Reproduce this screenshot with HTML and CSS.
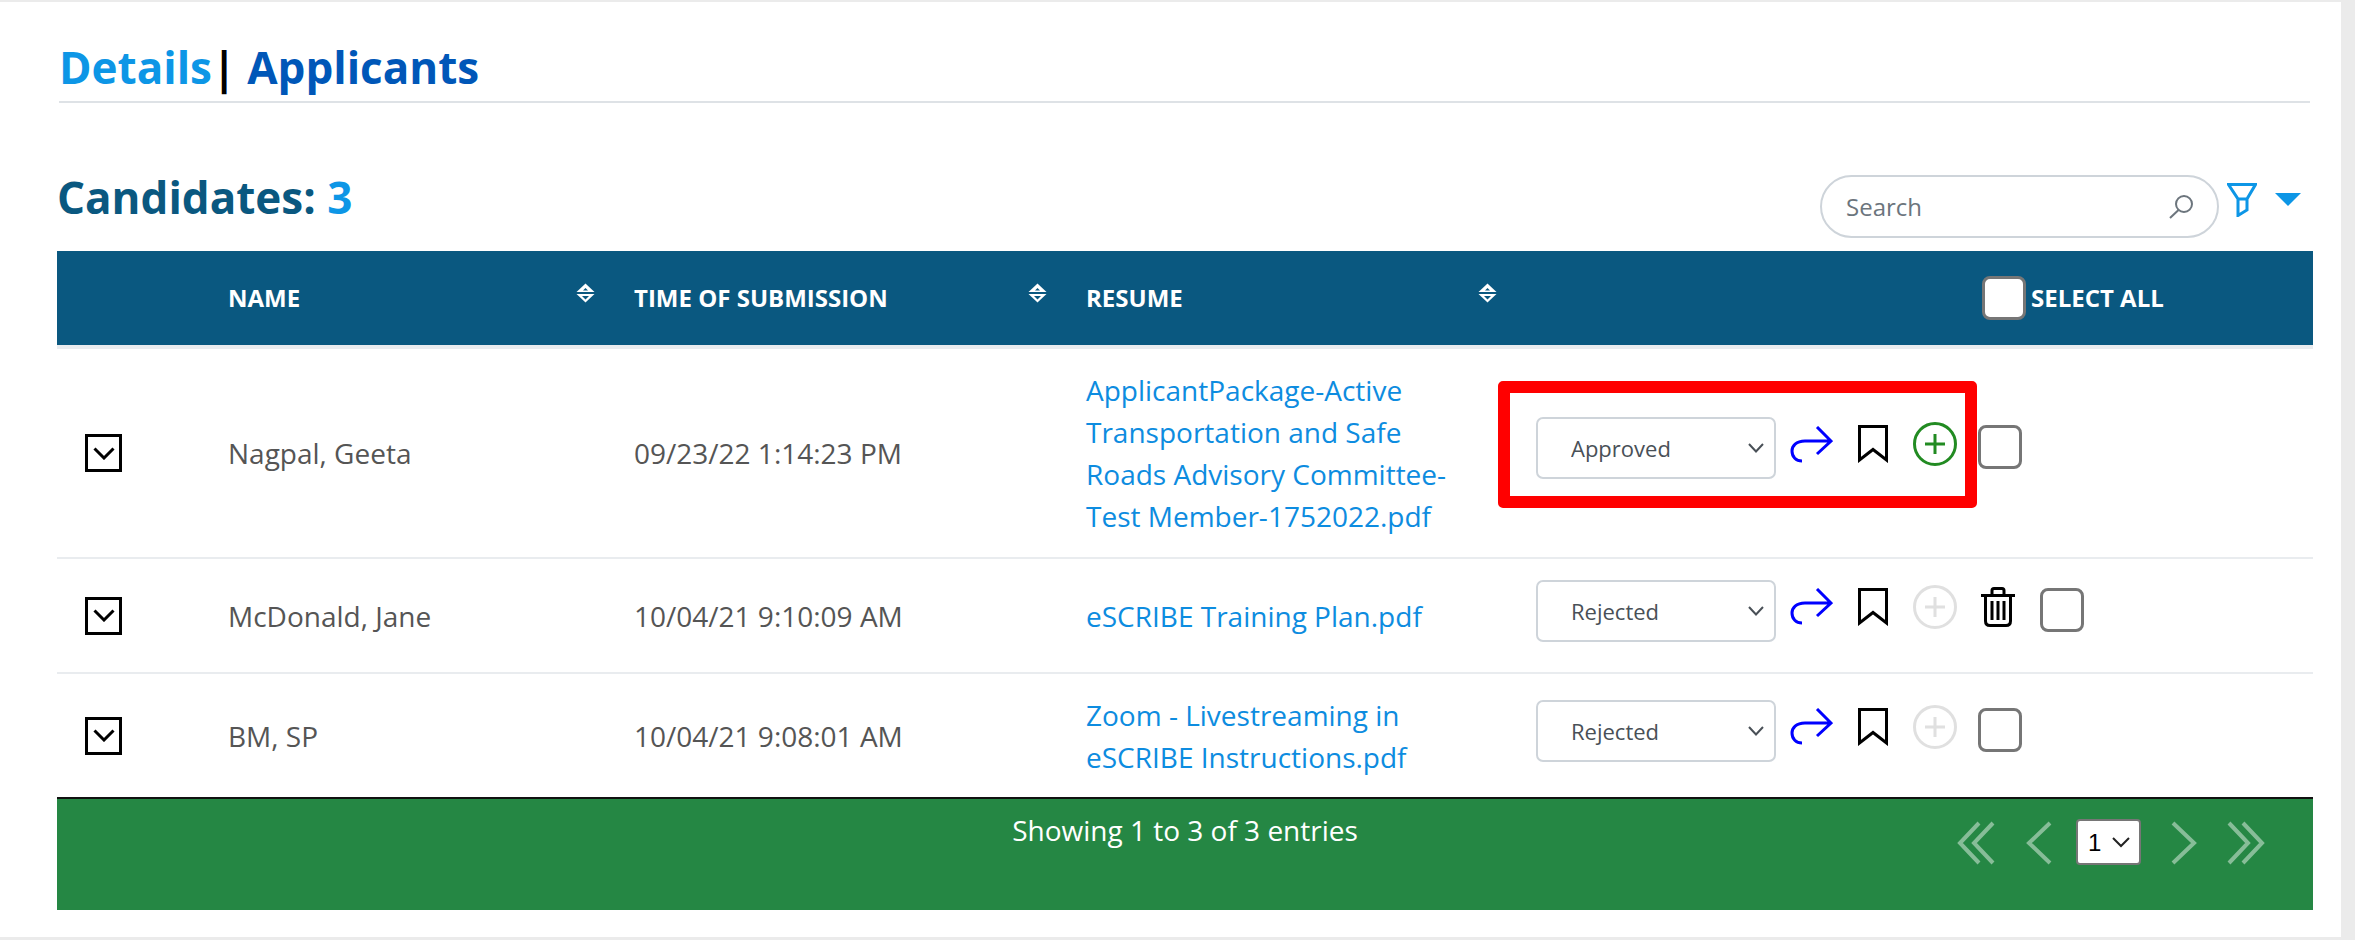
FILE: index.html
```html
<!DOCTYPE html>
<html lang="en">
<head>
<meta charset="utf-8">
<title>Applicants</title>
<link rel="stylesheet" href="styles.css">
</head>
<body>
<main class="panel">
  <nav class="tabs"><a class="tab-details">Details</a><span class="tab-sep">|</span><a class="tab-applicants">Applicants</a></nav>
  <div class="toolbar">
    <h2 class="count">Candidates: <span class="count-num">3</span></h2>
    <div class="search">
      <span class="search-text">Search</span>
      <svg class="search-icon" width="24" height="24" viewBox="0 0 24 24"><circle cx="15" cy="9" r="8" fill="none" stroke="#6c757d" stroke-width="2"/><path d="M9.5 15L1 23" stroke="#6c757d" stroke-width="2" fill="none"/></svg>
    </div>
    <svg class="filter" width="30" height="34" viewBox="0 0 30 34"><path d="M1.5 1.5H28.5L20 16V27L11 32.5V16ZM11 16H20" fill="none" stroke="#0d96e6" stroke-width="3"/></svg>
    <span class="caret"></span>
  </div>
  <table class="grid">
    <colgroup><col class="c1"><col class="c2"><col class="c3"><col class="c4"><col class="c5"></colgroup>
    <thead>
      <tr>
        <th></th>
        <th><div class="th-in"><span>NAME</span><svg width="19" height="20" viewBox="0 0 19 20"><path d="M9.5 0.5L18.5 9H0.5Z" fill="#fff"/><path d="M0.5 11H18.5L9.5 19.5Z" fill="#fff"/><path d="M9.5 5L12 7.5H7Z" fill="#0a5880"/><path d="M6 13H13L9.5 16.5Z" fill="#0a5880"/></svg></div></th>
        <th><div class="th-in"><span>TIME OF SUBMISSION</span><svg width="19" height="20" viewBox="0 0 19 20"><path d="M9.5 0.5L18.5 9H0.5Z" fill="#fff"/><path d="M0.5 11H18.5L9.5 19.5Z" fill="#fff"/><path d="M9.5 5L12 7.5H7Z" fill="#0a5880"/><path d="M6 13H13L9.5 16.5Z" fill="#0a5880"/></svg></div></th>
        <th><div class="th-in"><span>RESUME</span><svg width="19" height="20" viewBox="0 0 19 20"><path d="M9.5 0.5L18.5 9H0.5Z" fill="#fff"/><path d="M0.5 11H18.5L9.5 19.5Z" fill="#fff"/><path d="M9.5 5L12 7.5H7Z" fill="#0a5880"/><path d="M6 13H13L9.5 16.5Z" fill="#0a5880"/></svg></div></th>
        <th><div class="th-all"><input type="checkbox" class="check" aria-label="Select all"><span>SELECT ALL</span></div></th>
      </tr>
    </thead>
    <tbody>
      <tr class="row-1">
        <td class="cell-exp"><span class="expand"><svg width="22" height="13" viewBox="0 0 22 13"><path d="M1.5 1.5L11 11L20.5 1.5" fill="none" stroke="#000" stroke-width="3"/></svg></span></td>
        <td>Nagpal, Geeta</td>
        <td>09/23/22 1:14:23 PM</td>
        <td><a class="file">ApplicantPackage-Active Transportation and Safe Roads Advisory Committee-Test Member-1752022.pdf</a></td>
        <td class="cell-act">
          <div class="actions">
            <select class="status"><option>Approved</option></select>
            <svg class="ic ic-share" width="43" height="37" viewBox="0 0 43 37"><path d="M27 1L41 15L27 28M41 15H15C6 15 2 20 2 25C2 31 6 35 12 35" fill="none" stroke="#00f" stroke-width="3"/></svg>
            <svg class="ic ic-mark" width="30" height="38" viewBox="0 0 30 38"><path d="M1.5 1.5H28.5V35L15 24.5L1.5 35Z" fill="none" stroke="#000" stroke-width="3"/></svg>
            <svg class="ic ic-add" width="44" height="44" viewBox="0 0 44 44"><circle cx="22" cy="22" r="20.5" fill="none" stroke="#228b22" stroke-width="3"/><path d="M22 12V32M12 22H32" fill="none" stroke="#228b22" stroke-width="3"/></svg>
            <input type="checkbox" class="check check-row" aria-label="Select">
            <div class="highlight"></div>
          </div>
        </td>
      </tr>
      <tr class="row-2">
        <td class="cell-exp"><span class="expand"><svg width="22" height="13" viewBox="0 0 22 13"><path d="M1.5 1.5L11 11L20.5 1.5" fill="none" stroke="#000" stroke-width="3"/></svg></span></td>
        <td>McDonald, Jane</td>
        <td>10/04/21 9:10:09 AM</td>
        <td><a class="file">eSCRIBE Training Plan.pdf</a></td>
        <td class="cell-act">
          <div class="actions">
            <select class="status"><option>Rejected</option></select>
            <svg class="ic ic-share" width="43" height="37" viewBox="0 0 43 37"><path d="M27 1L41 15L27 28M41 15H15C6 15 2 20 2 25C2 31 6 35 12 35" fill="none" stroke="#00f" stroke-width="3"/></svg>
            <svg class="ic ic-mark" width="30" height="38" viewBox="0 0 30 38"><path d="M1.5 1.5H28.5V35L15 24.5L1.5 35Z" fill="none" stroke="#000" stroke-width="3"/></svg>
            <svg class="ic ic-add" width="44" height="44" viewBox="0 0 44 44"><circle cx="22" cy="22" r="20.5" fill="none" stroke="#e0e0e0" stroke-width="3"/><path d="M22 12V32M12 22H32" fill="none" stroke="#e0e0e0" stroke-width="3"/></svg>
            <svg class="ic ic-trash" width="34" height="40" viewBox="0 0 34 40"><path d="M0 8.5H34M11 8V3.5Q11 1.5 13 1.5H21Q23 1.5 23 3.5V8M4.5 9V34Q4.5 38.5 9 38.5H25Q29.5 38.5 29.5 34V9M11 14V33M17 14V33M23 14V33" fill="none" stroke="#000" stroke-width="3"/></svg>
            <input type="checkbox" class="check check-row check-after-trash" aria-label="Select">
          </div>
        </td>
      </tr>
      <tr class="row-3">
        <td class="cell-exp"><span class="expand"><svg width="22" height="13" viewBox="0 0 22 13"><path d="M1.5 1.5L11 11L20.5 1.5" fill="none" stroke="#000" stroke-width="3"/></svg></span></td>
        <td>BM, SP</td>
        <td>10/04/21 9:08:01 AM</td>
        <td><a class="file">Zoom - Livestreaming in eSCRIBE Instructions.pdf</a></td>
        <td class="cell-act">
          <div class="actions">
            <select class="status"><option>Rejected</option></select>
            <svg class="ic ic-share" width="43" height="37" viewBox="0 0 43 37"><path d="M27 1L41 15L27 28M41 15H15C6 15 2 20 2 25C2 31 6 35 12 35" fill="none" stroke="#00f" stroke-width="3"/></svg>
            <svg class="ic ic-mark" width="30" height="38" viewBox="0 0 30 38"><path d="M1.5 1.5H28.5V35L15 24.5L1.5 35Z" fill="none" stroke="#000" stroke-width="3"/></svg>
            <svg class="ic ic-add" width="44" height="44" viewBox="0 0 44 44"><circle cx="22" cy="22" r="20.5" fill="none" stroke="#e0e0e0" stroke-width="3"/><path d="M22 12V32M12 22H32" fill="none" stroke="#e0e0e0" stroke-width="3"/></svg>
            <input type="checkbox" class="check check-row" aria-label="Select">
          </div>
        </td>
      </tr>
    </tbody>
  </table>
  <footer class="foot">
    <div class="foot-info">Showing 1 to 3 of 3 entries</div>
    <div class="pager">
      <svg class="pg pg-first" width="38" height="44" viewBox="0 0 38 44"><path d="M22 2L3 22L22 42M36 2L17 22L36 42" fill="none" stroke="#fff" stroke-opacity=".45" stroke-width="4"/></svg>
      <svg class="pg pg-prev" width="26" height="44" viewBox="0 0 26 44"><path d="M24 2L3 22L24 42" fill="none" stroke="#fff" stroke-opacity=".45" stroke-width="4"/></svg>
      <select class="page-sel"><option>1</option></select>
      <svg class="pg pg-next" width="26" height="44" viewBox="0 0 26 44"><path d="M2 2L23 22L2 42" fill="none" stroke="#fff" stroke-opacity=".45" stroke-width="4"/></svg>
      <svg class="pg pg-last" width="38" height="44" viewBox="0 0 38 44"><path d="M2 2L21 22L2 42M16 2L35 22L16 42" fill="none" stroke="#fff" stroke-opacity=".45" stroke-width="4"/></svg>
    </div>
  </footer>
</main>
</body>
</html>
```
FILE: styles.css
```css
* { box-sizing: border-box; }
html, body { margin: 0; height: 100%; }
body {
  background: #ebebeb;
  font-family: "Open Sans", sans-serif;
  color: #555;
  overflow: hidden;
}
.panel {
  width: 2341px;
  height: 935px;
  margin-top: 2px;
  background: #fff;
  padding: 0 28px 0 57px;
  display: flex;
  flex-direction: column;
}
.tabs {
  margin: 0 3px 0 2px;
  padding: 37px 0 0 0;
  border-bottom: 2px solid #dee2e6;
  box-sizing: content-box;
  height: 62px;
  font-size: 44px;
  font-weight: 700;
  line-height: 56px;
  display: flex;
}
.tab-details { color: #0d96e6; }
.tab-sep { color: #000; margin: 0 11px 0 0; font-weight: 700; }
.tab-applicants { color: #0057b8; }
.toolbar {
  height: 148px;
  display: flex;
  align-items: flex-start;
}
.count {
  margin: 66px 0 0 0;
  font-size: 44px;
  font-weight: 700;
  line-height: 56px;
  color: #0a5880;
  flex: 1;
}
.count-num { color: #0d96e6; }
.search {
  width: 399px;
  height: 63px;
  margin-top: 72px;
  border: 2px solid #ced4da;
  border-radius: 32px;
  display: flex;
  align-items: center;
  justify-content: space-between;
  padding: 0 24px 0 24px;
  font-size: 24px;
  color: #6c757d;
}
.filter { margin: 80px 0 0 8px; }
.caret {
  margin: 90px 12px 0 18px;
  border-left: 13px solid transparent;
  border-right: 13px solid transparent;
  border-top: 13px solid #0d96e6;
}
.grid {
  width: 2256px;
  border-collapse: separate;
  border-spacing: 0;
  table-layout: fixed;
  font-size: 28px;
}
.c1 { width: 171px; }
.c2 { width: 406px; }
.c3 { width: 452px; }
.c4 { width: 450px; }
.c5 { width: 777px; }
.grid thead th {
  height: 94px;
  padding: 0;
  background: #0a5880;
  color: #fff;
  font-size: 24px;
  font-weight: 700;
  text-align: left;
  border-bottom: 4px solid #e9ecef;
  box-sizing: content-box;
}
.th-in {
  display: flex;
  justify-content: space-between;
  align-items: flex-start;
  padding-right: 39px;
  line-height: 32px;
  height: 62px;
}
.th-in span { margin-top: 15px; }
.th-in svg { margin-top: 16px; }
.th-all {
  display: flex;
  align-items: flex-start;
  margin-left: 446px;
  height: 62px;
}
.th-all .check { margin-top: 9px; }
.th-all span { margin: 15px 0 0 5px; line-height: 32px; }
.grid td {
  padding: 0;
  vertical-align: middle;
  line-height: 42px;
  color: #555;
}
.row-1 td { height: 210px; border-bottom: 2px solid #e9ecef; }
.row-2 td { height: 115px; border-bottom: 2px solid #e9ecef; }
.row-3 td { height: 123px; }
.cell-exp { padding-left: 28px !important; }
.expand {
  width: 37px;
  height: 38px;
  border: 3px solid #000;
  display: flex;
  align-items: center;
  justify-content: center;
}
.file {
  display: block;
  max-width: 375px;
  color: #0d8ce0;
}
.cell-act { padding-bottom: 10px !important; }
.actions {
  display: flex;
  align-items: center;
  position: relative;
  height: 62px;
}
.status {
  appearance: none;
  width: 240px;
  height: 62px;
  border: 2px solid #ced4da;
  border-radius: 7px;
  padding: 0 0 0 33px;
  font-family: "Open Sans", sans-serif;
  font-size: 22px;
  color: #495057;
  background: #fff url("data:image/svg+xml,%3Csvg xmlns='http://www.w3.org/2000/svg' width='16' height='10'%3E%3Cpath d='M1 1L8 8.5L15 1' fill='none' stroke='%23495057' stroke-width='2'/%3E%3C/svg%3E") no-repeat right 10px center;
}
.ic { margin-bottom: 8px; flex: none; }
.ic-share { margin-left: 14px; }
.ic-mark { margin-left: 25px; }
.ic-add { margin-left: 25px; }
.ic-trash { margin-left: 24px; }
.check {
  appearance: none;
  margin: 0;
  width: 44px;
  height: 44px;
  background: #fff;
  border: 3px solid #767676;
  border-radius: 8px;
  flex: none;
}
.check-row { margin-left: 21px; margin-bottom: 2px; }
.check-after-trash { margin-left: 25px; }
.highlight {
  position: absolute;
  left: -38px;
  top: -36px;
  width: 479px;
  height: 127px;
  border: 12px solid #f00;
  border-radius: 5px;
  pointer-events: none;
}
.foot {
  border-top: 2px solid #111;
  height: 113px;
  width: 2256px;
  background: #258744;
  display: flex;
  position: relative;
  color: #fff;
  font-size: 28px;
}
.foot-info {
  flex: 1;
  text-align: center;
  padding: 12px 0 0 0;
  line-height: 38px;
}
.pager {
  position: absolute;
  right: 48px;
  top: 20px;
  display: flex;
  align-items: flex-start;
}
.pg { flex: none; }
.pg-first { margin-top: 2px; }
.pg-prev { margin: 2px 24px 0 31px; }
.page-sel {
  appearance: none;
  width: 65px;
  height: 46px;
  border: 2px solid #767676;
  border-radius: 4px;
  padding: 0 0 0 10px;
  font-family: "Liberation Sans", sans-serif;
  font-size: 24px;
  color: #000;
  background: #fff url("data:image/svg+xml,%3Csvg xmlns='http://www.w3.org/2000/svg' width='18' height='11'%3E%3Cpath d='M1 1L9 9L17 1' fill='none' stroke='%23222' stroke-width='2'/%3E%3C/svg%3E") no-repeat right 9px center;
}
.pg-next { margin: 2px 0 0 30px; }
.pg-last { margin: 2px 0 0 30px; }
```
